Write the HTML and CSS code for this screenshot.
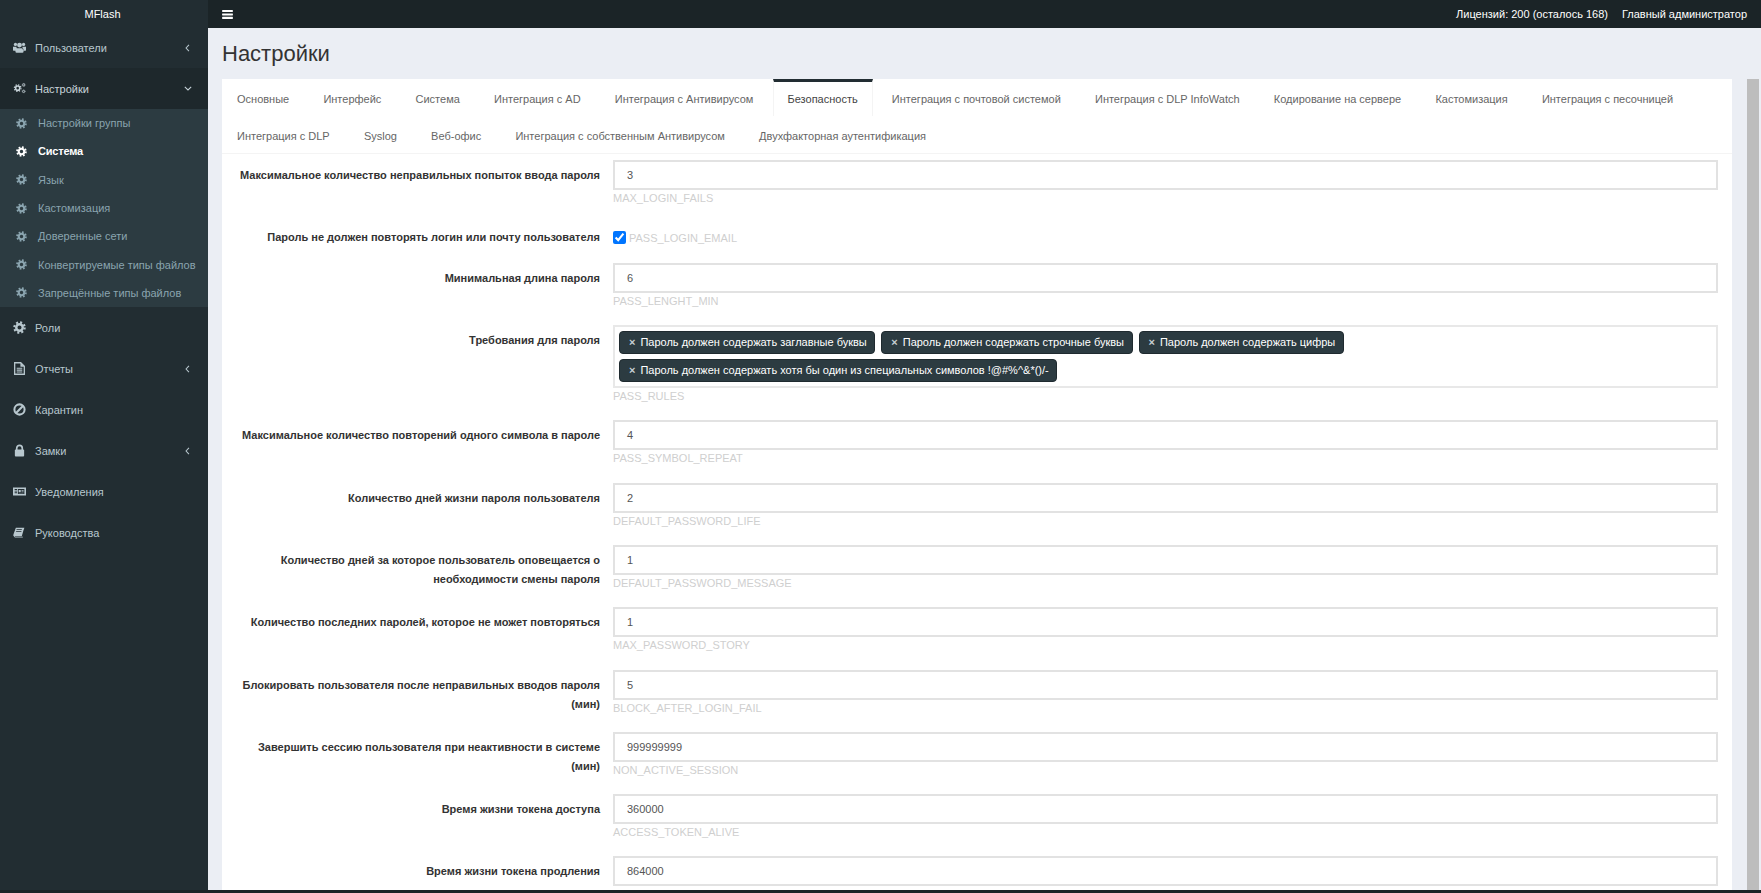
FILE: index.html
```html
<!DOCTYPE html>
<html lang="ru">
<head>
<meta charset="utf-8">
<title>Настройки</title>
<link rel="stylesheet" href="styles.css">
</head>
<body>
<svg class="defs" width="0" height="0" aria-hidden="true">
  <symbol id="cog" viewBox="0 0 16 16"><circle cx="8" cy="8" r="4" fill="none" stroke="currentColor" stroke-width="3"/><circle cx="8" cy="8" r="6.4" fill="none" stroke="currentColor" stroke-width="2.6" stroke-dasharray="2.51 2.51"/></symbol>
  <symbol id="users" viewBox="0 0 16 14"><circle cx="3" cy="3.2" r="2"/><circle cx="13" cy="3.2" r="2"/><circle cx="8" cy="4" r="3"/><path d="M0 6.2h4.2a4 4 0 0 0 .8 2.4 4 4 0 0 0-2 2.4H.6q-.6 0-.6-.8zM16 6.2h-4.2a4 4 0 0 1-.8 2.4 4 4 0 0 1 2 2.4h2.4q.6 0 .6-.8zM4.5 8h7q1.5 0 1.5 2.5V12q0 1.500-1.500 1.500h-7Q3 13.500 3 12v-1.500Q3 8 4.500 8z"/></symbol>
  <symbol id="cogs" viewBox="0 0 16 14"><g transform="translate(0 1.500) scale(.72)"><use href="#cog"/></g><g transform="translate(10.200 0) scale(.36)"><use href="#cog"/></g><g transform="translate(10.200 8) scale(.36)"><use href="#cog"/></g></symbol>
  <symbol id="file" viewBox="0 0 12 14"><path fill="none" stroke="currentColor" stroke-width="1.400" d="M.8.800h6.500l3.900 3.900v8.500H.8z"/><path d="M7 .800v4.200h4.200zM3 6.200h6v1.100H3zM3 8.200h6v1.100H3zM3 10.200h6v1.100H3z"/></symbol>
  <symbol id="ban" viewBox="0 0 14 14"><circle cx="7" cy="7" r="5.500" fill="none" stroke="currentColor" stroke-width="2.200"/><path d="M3.300 10.700l7.400-7.400" stroke="currentColor" stroke-width="2.200"/></symbol>
  <symbol id="lock" viewBox="0 0 12 14"><path fill="none" stroke="currentColor" stroke-width="1.800" d="M3 7V4.500a3 3 0 0 1 6 0V7"/><rect x="1" y="6" width="10" height="7.500" rx="1"/></symbol>
  <symbol id="news" viewBox="0 0 16 12"><path fill-rule="evenodd" d="M0 1h16v10H0zM6 3v6h8V3zM2 3v1h3V3zM2 5v1h3V5zM2 7v1h3V7z"/><path d="M7 4h2.500v3H7zM10.500 4H13v1h-2.500zM10.500 6H13v1h-2.500zM7 8h6v.600H7z"/></symbol>
  <symbol id="book" viewBox="0 0 16 14"><path d="M3.500 1H14l-.8 2.500-.2.500-2.200 7.500H1.500Q0 11.500.5 9.500zM4.500 3l-.3 1h6.500l.3-1zM4 5l-.3 1h6.500l.3-1z"/><path d="M.8 10.500Q.8 13 2.500 13h9.500l1-3.800-.7 3H2.800q-1 0-1-1.500z"/></symbol>
  <symbol id="bars" viewBox="0 0 12 10"><path d="M.5 0h11q.5 0 .5.500v1.300q0 .500-.5.500H.5Q0 2.300 0 1.800V.5Q0 0 .5 0zM.5 3.800h11q.5 0 .5.500v1.300q0 .500-.5.500H.5q-.5 0-.5-.500V4.300q0-.500.500-.500zM.5 7.600h11q.5 0 .5.500v1.300q0 .500-.5.500H.5q-.5 0-.5-.500V8.100q0-.500.500-.500z"/></symbol>
  <symbol id="left" viewBox="0 0 6 10"><path d="M4.800 1L1.200 5l3.600 4" fill="none" stroke="currentColor" stroke-width="1.300"/></symbol>
  <symbol id="down" viewBox="0 0 10 6"><path d="M1 1l4 3.800L9 1" fill="none" stroke="currentColor" stroke-width="1.300"/></symbol>
</svg>
<div class="shell">
  <aside class="sidebar">
    <div class="brand">MFlash</div>
    <nav>
      <a class="item"><svg class="ico"><use href="#users"/></svg><span class="item-text">Пользователи</span><svg class="chev"><use href="#left"/></svg></a>
      <a class="item item-open"><svg class="ico"><use href="#cogs"/></svg><span class="item-text">Настройки</span><svg class="chev-down"><use href="#down"/></svg></a>
      <div class="submenu">
        <a class="sub"><svg class="sub-ico"><use href="#cog"/></svg>Настройки группы</a>
        <a class="sub sub-active"><svg class="sub-ico"><use href="#cog"/></svg>Система</a>
        <a class="sub"><svg class="sub-ico"><use href="#cog"/></svg>Язык</a>
        <a class="sub"><svg class="sub-ico"><use href="#cog"/></svg>Кастомизация</a>
        <a class="sub"><svg class="sub-ico"><use href="#cog"/></svg>Доверенные сети</a>
        <a class="sub"><svg class="sub-ico"><use href="#cog"/></svg>Конвертируемые типы файлов</a>
        <a class="sub"><svg class="sub-ico"><use href="#cog"/></svg>Запрещённые типы файлов</a>
      </div>
      <a class="item"><svg class="ico"><use href="#cog"/></svg><span class="item-text">Роли</span></a>
      <a class="item"><svg class="ico"><use href="#file"/></svg><span class="item-text">Отчеты</span><svg class="chev"><use href="#left"/></svg></a>
      <a class="item"><svg class="ico"><use href="#ban"/></svg><span class="item-text">Карантин</span></a>
      <a class="item"><svg class="ico"><use href="#lock"/></svg><span class="item-text">Замки</span><svg class="chev"><use href="#left"/></svg></a>
      <a class="item"><svg class="ico"><use href="#news"/></svg><span class="item-text">Уведомления</span></a>
      <a class="item"><svg class="ico"><use href="#book"/></svg><span class="item-text">Руководства</span></a>
    </nav>
  </aside>
  <div class="main">
    <header class="topbar">
      <svg class="burger"><use href="#bars"/></svg>
      <div class="top-right"><span>Лицензий: 200 (осталось 168)</span><span>Главный администратор</span></div>
    </header>
    <h1 class="title">Настройки</h1>
    <div class="content">
      <section class="card">
        <ul class="tabs">
          <li class="tab">Основные</li>
          <li class="tab">Интерфейс</li>
          <li class="tab">Система</li>
          <li class="tab">Интеграция с AD</li>
          <li class="tab">Интеграция с Антивирусом</li>
          <li class="tab tab-active">Безопасность</li>
          <li class="tab">Интеграция с почтовой системой</li>
          <li class="tab">Интеграция с DLP InfoWatch</li>
          <li class="tab">Кодирование на сервере</li>
          <li class="tab">Кастомизация</li>
          <li class="tab">Интеграция с песочницей</li>
          <li class="tab">Интеграция с DLP</li>
          <li class="tab">Syslog</li>
          <li class="tab">Веб-офис</li>
          <li class="tab">Интеграция с собственным Антивирусом</li>
          <li class="tab">Двухфакторная аутентификация</li>
        </ul>
        <form class="form">
          <div class="row"><label class="label">Максимальное количество неправильных попыток ввода пароля</label><div class="field"><div class="input">3</div><div class="help">MAX_LOGIN_FAILS</div></div></div>
          <div class="row row-check"><label class="label">Пароль не должен повторять логин или почту пользователя</label><div class="field check-field"><input class="check" type="checkbox" checked><span class="help-inline">PASS_LOGIN_EMAIL</span></div></div>
          <div class="row"><label class="label">Минимальная длина пароля</label><div class="field"><div class="input">6</div><div class="help">PASS_LENGHT_MIN</div></div></div>
          <div class="row"><label class="label">Требования для пароля</label><div class="field">
            <div class="tags">
              <span class="tag"><i class="tag-x">×</i>Пароль должен содержать заглавные буквы</span>
              <span class="tag"><i class="tag-x">×</i>Пароль должен содержать строчные буквы</span>
              <span class="tag"><i class="tag-x">×</i>Пароль должен содержать цифры</span>
              <span class="tag"><i class="tag-x">×</i>Пароль должен содержать хотя бы один из специальных символов !@#%^&amp;*()/-</span>
            </div>
            <div class="help">PASS_RULES</div></div></div>
          <div class="row"><label class="label">Максимальное количество повторений одного символа в пароле</label><div class="field"><div class="input">4</div><div class="help">PASS_SYMBOL_REPEAT</div></div></div>
          <div class="row"><label class="label">Количество дней жизни пароля пользователя</label><div class="field"><div class="input">2</div><div class="help">DEFAULT_PASSWORD_LIFE</div></div></div>
          <div class="row"><label class="label">Количество дней за которое пользователь оповещается о необходимости смены пароля</label><div class="field"><div class="input">1</div><div class="help">DEFAULT_PASSWORD_MESSAGE</div></div></div>
          <div class="row"><label class="label">Количество последних паролей, которое не может повторяться</label><div class="field"><div class="input">1</div><div class="help">MAX_PASSWORD_STORY</div></div></div>
          <div class="row"><label class="label">Блокировать пользователя после неправильных вводов пароля (мин)</label><div class="field"><div class="input">5</div><div class="help">BLOCK_AFTER_LOGIN_FAIL</div></div></div>
          <div class="row"><label class="label">Завершить сессию пользователя при неактивности в системе (мин)</label><div class="field"><div class="input">999999999</div><div class="help">NON_ACTIVE_SESSION</div></div></div>
          <div class="row"><label class="label">Время жизни токена доступа</label><div class="field"><div class="input">360000</div><div class="help">ACCESS_TOKEN_ALIVE</div></div></div>
          <div class="row"><label class="label">Время жизни токена продления</label><div class="field"><div class="input">864000</div></div></div>
        </form>
      </section>
      <div class="scrollbar"></div>
    </div>
  </div>
</div>
<div class="bottom"></div>
</body>
</html>
```
FILE: styles.css
```css
* { box-sizing: border-box; }
html, body { height: 100%; margin: 0; }
body {
  display: flex;
  flex-direction: column;
  overflow: hidden;
  font-family: "Liberation Sans", Arial, sans-serif;
  font-size: 11px;
  color: #333;
  background: #ebeef4;
}
.defs { position: absolute; }
.shell { flex: 1; min-height: 0; display: flex; }
.bottom { height: 3px; background: #1b2427; }

.sidebar { width: 208px; flex: none; background: #222d32; color: #b8c7ce; }
.brand { height: 27px; line-height: 29px; text-align: center; color: #fff; padding-right: 3px; }
.item { display: flex; align-items: center; height: 41px; padding-left: 13px; }
.item-open { background: #1e282c; color: #c8d4da; }
.ico { width: 13px; height: 13px; fill: currentColor; flex: none; }
.item-text { margin-left: 9px; }
.chev { width: 5px; height: 8px; margin-left: auto; margin-right: 18px; }
.chev-down { width: 8px; height: 5px; margin-left: auto; margin-right: 16px; }
.submenu { background: #2c3b41; }
.sub { display: flex; align-items: center; height: 28.3px; padding-left: 16px; color: #8aa4af; }
.sub-active { color: #fff; font-weight: 700; letter-spacing: -.2px; }
.sub-ico { width: 11px; height: 11px; margin-right: 11px; flex: none; }

.main { flex: 1; min-width: 0; display: flex; flex-direction: column; }
.topbar { height: 28px; flex: none; display: flex; align-items: center; justify-content: space-between; background: #1b2427; color: #fff; padding: 0 14px; }
.burger { width: 11px; height: 9px; fill: #fff; }
.top-right { display: flex; gap: 14px; }
.title { margin: 0; height: 51px; line-height: 51px; padding-left: 14px; font-size: 22px; font-weight: 400; color: #333; flex: none; }
.content { flex: 1; min-height: 0; display: flex; padding-left: 14px; overflow: hidden; }
.card { width: 1510px; flex: none; background: #fff; align-self: flex-start; }
.scrollbar { width: 12px; margin-left: 15px; background: #bdbdbd; flex: none; align-self: stretch; }

.tabs { list-style: none; margin: 0; padding: 0; display: flex; flex-wrap: wrap; border-bottom: 1px solid #f4f4f4; height: 75px; align-content: flex-start; }
.tab { height: 36.500px; line-height: 34px; padding: 0 15px; margin-right: 4.200px; color: #666; border-top: 3px solid transparent; }
.tab-active { border-top-color: #222d32; border-left: 1px solid #f4f4f4; border-right: 1px solid #f4f4f4; color: #444; padding: 0 14px; }

.form { padding-top: 5.500px; }
.row { display: flex; margin-bottom: 15.300px; }
.row-check { height: 25.700px; align-items: center; padding-top: 5px; }
.label { width: 378px; flex: none; padding: 6px 0 0 15px; text-align: right; font-weight: 700; line-height: 19px; }
.row-check .label { padding-top: 0; }
.field { width: 1105px; margin-left: 13px; flex: none; }
.input { height: 30px; line-height: 26px; border: 2px solid #e2e2e2; padding: 0 12px; color: #555; background: #fff; }
.help { height: 17px; line-height: 17px; color: #cfcfcf; }
.check-field { display: flex; align-items: center; }
.check { width: 13px; height: 13px; margin: 0 3px 0 0; accent-color: #0075ff; }
.help-inline { color: #cfcfcf; padding-top: 2px; }
.tags { min-height: 63px; border: 2px solid #e8e8e8; padding: 4px; display: flex; flex-wrap: wrap; align-content: flex-start; gap: 5px 6px; }
.tag { height: 23px; line-height: 21px; background: #2c3b41; border: 1px solid #1f2a2f; border-radius: 4px; color: #fff; padding: 0 7.500px 0 9px; white-space: nowrap; }
.tag-x { font-style: normal; font-weight: 700; color: #c7d0d4; margin-right: 5px; }
```
